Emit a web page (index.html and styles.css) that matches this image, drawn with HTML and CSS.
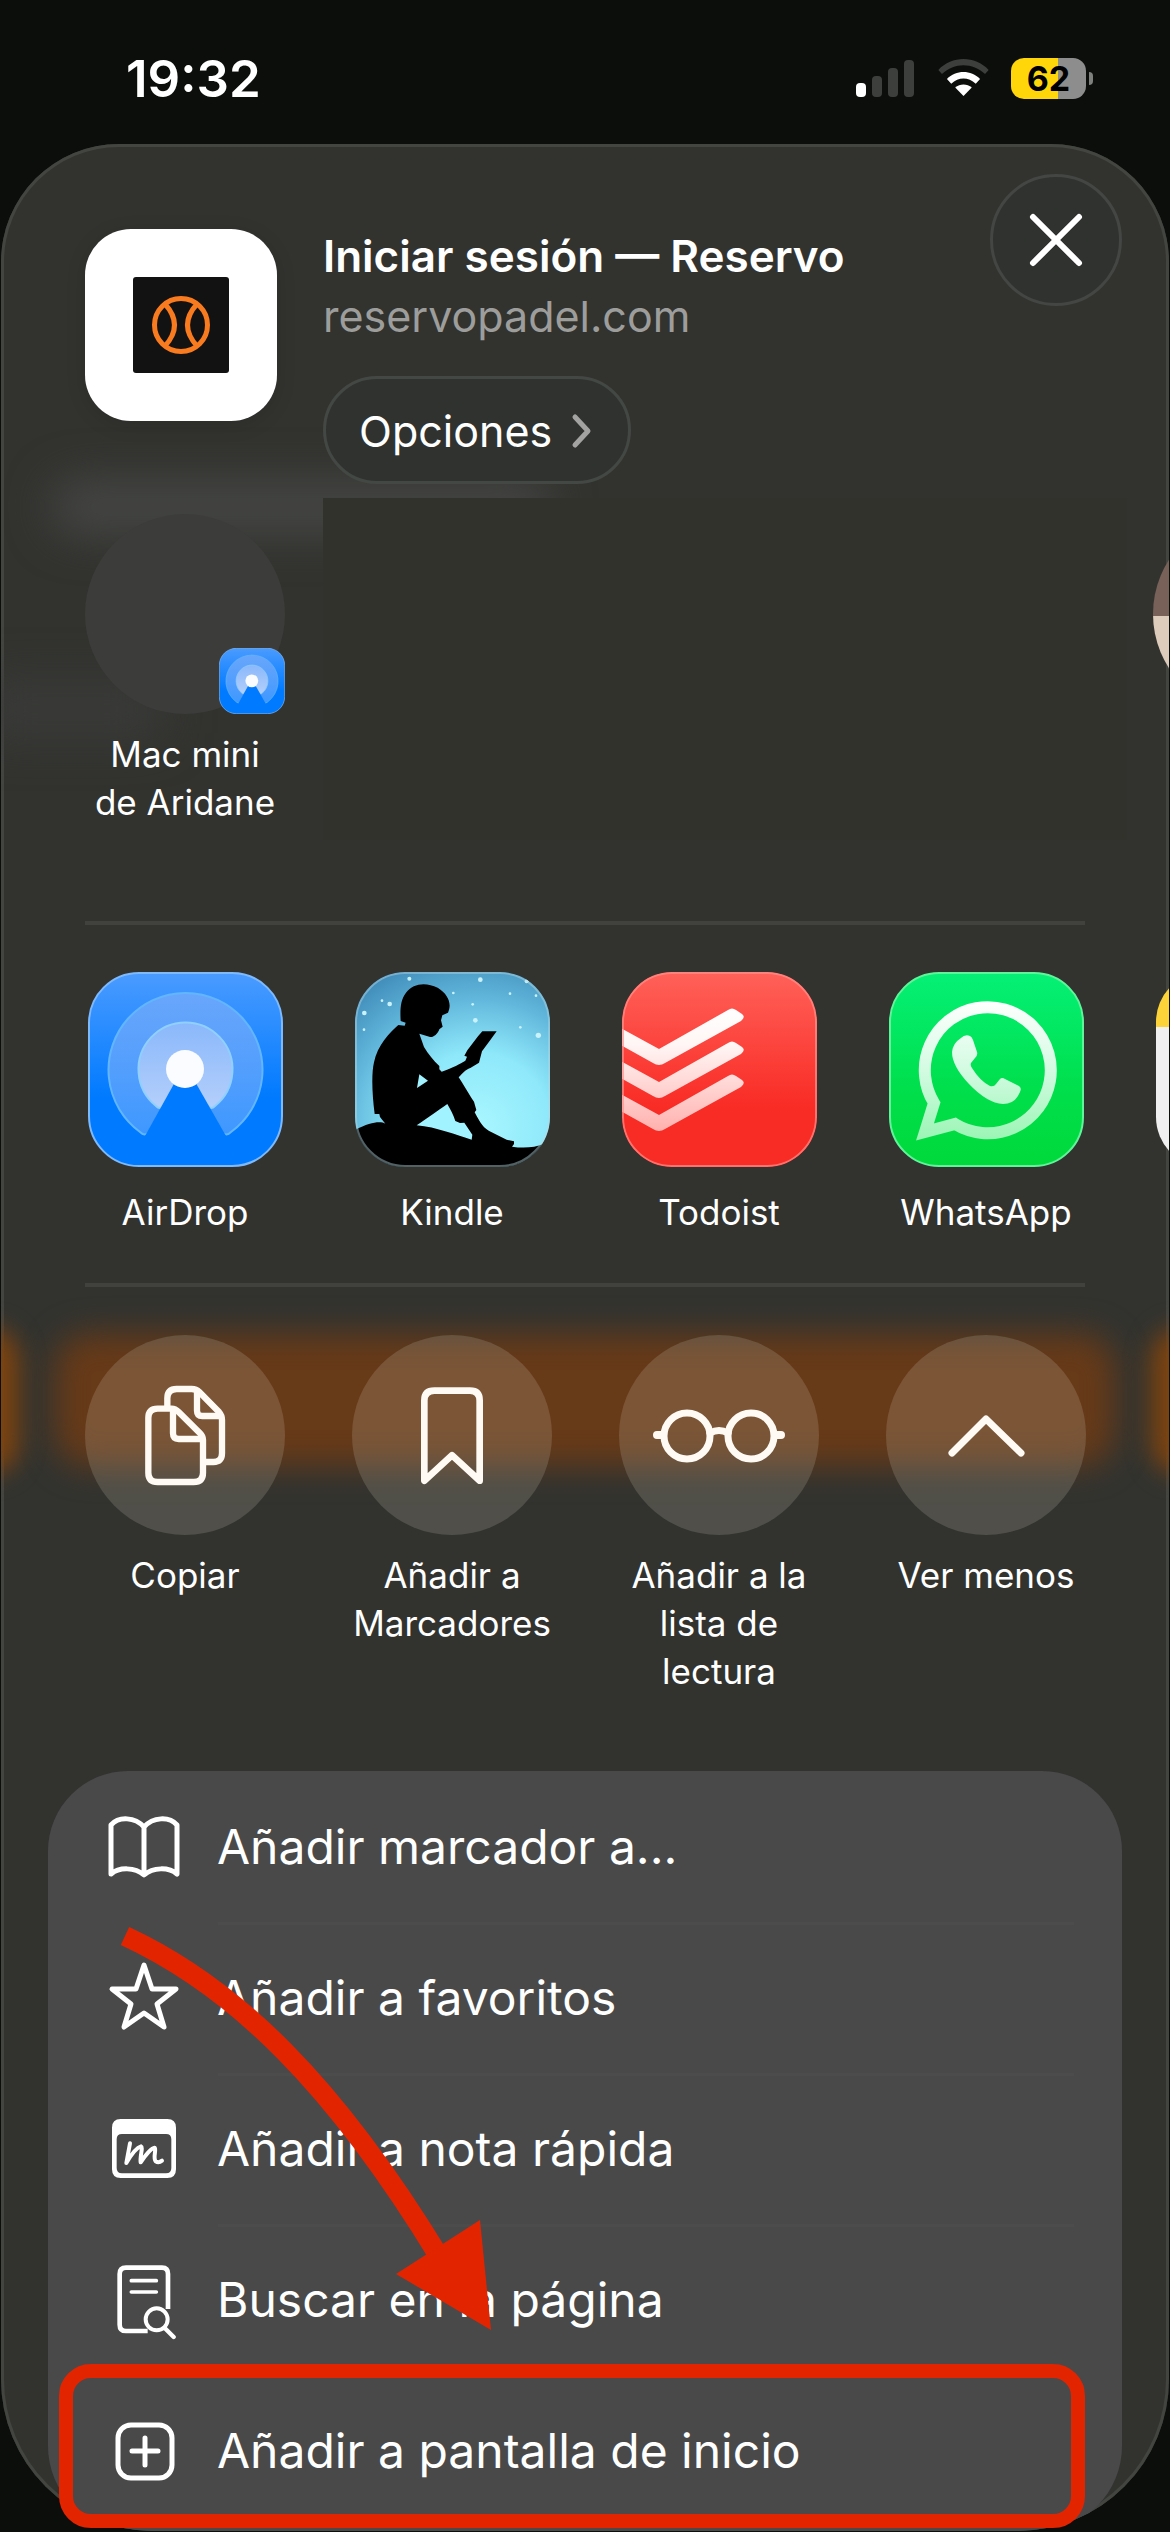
FILE: index.html
```html
<!DOCTYPE html>
<html lang="es">
<head>
<meta charset="utf-8">
<meta name="viewport" content="width=device-width, initial-scale=1">
<title>Iniciar sesión — Reservo</title>
<link rel="stylesheet" href="styles.css">
</head>
<body>
<div class="screen">
  <header class="status">
    <time class="status-time">19:32</time>
    <div class="status-icons">
      <svg class="signal" viewBox="0 0 60 40" aria-hidden="true">
        <rect x="0" y="25" width="10" height="14" rx="4" fill="#fff"/>
        <g fill="#3d3f3d"><rect x="16" y="18" width="10" height="21" rx="4"/><rect x="32" y="10" width="10" height="29" rx="4"/><rect x="48" y="2" width="10" height="37" rx="4"/></g>
      </svg>
      <svg class="wifi" viewBox="288 54 154 120" aria-hidden="true">
        <path d="M289 90C330 46 400 46 441 90L430 102C393 67 337 67 300 102Z" fill="#3d3f3d"/>
        <path d="M315 117C342 89 388 89 415 117L402 131C380 110 350 110 328 131Z" fill="#fff"/>
        <path d="M340 143C354 130 376 130 390 143L365 168Z" fill="#fff"/>
      </svg>
      <div class="battery"><span class="battery-level">62</span></div>
    </div>
  </header>

  <main class="sheet">
    <div class="glow glow-heading"></div>
    <div class="glow glow-text"></div>
    <div class="glow glow-button"></div>
    <div class="glow glow-left"></div>
    <div class="glow glow-right"></div>

    <section class="page-info">
      <div class="site-icon">
        <svg viewBox="0 0 96 96" aria-hidden="true">
          <rect width="96" height="96" rx="3" fill="#121212"/>
          <g fill="none" stroke="#f97b1f" stroke-width="5"><circle cx="48" cy="48" r="26.500"/><path d="M32 27Q51 48 32 69M64 27Q45 48 64 69"/></g>
        </svg>
      </div>
      <div class="page-text">
        <h1 class="page-title">Iniciar sesión — Reservo</h1>
        <p class="page-domain">reservopadel.com</p>
        <button class="options" type="button">Opciones
          <svg viewBox="0 0 24 36" aria-hidden="true"><path d="M5 4L18 18L5 32" fill="none" stroke="#a3a4a2" stroke-width="5" stroke-linecap="round" stroke-linejoin="round"/></svg>
        </button>
      </div>
      <button class="close" type="button" aria-label="Cerrar">
        <svg viewBox="0 0 54 54" aria-hidden="true"><path d="M4 4L50 50M50 4L4 50" stroke="#fff" stroke-width="6" stroke-linecap="round"/></svg>
      </button>
    </section>

    <section class="people">
      <button class="tile person" type="button">
        <span class="avatar">
          <svg class="avatar-badge" viewBox="0 0 195 195" aria-hidden="true"><use href="#airdrop"/></svg>
        </span>
        <span class="tile-label">Mac mini<br>de Aridane</span>
      </button>
      <div class="people-hidden"></div>
      <div class="photo"></div>
    </section>

    <hr class="divider">

    <section class="tiles apps">
      <button class="tile" type="button">
        <svg class="app-icon" viewBox="0 0 195 195" aria-hidden="true">
          <defs>
            <linearGradient id="blue" x1="0" y1="0" x2="0" y2="1"><stop offset="0" stop-color="#4a9bff"/><stop offset=".65" stop-color="#007aff"/></linearGradient>
            <linearGradient id="ring" x1="0" y1="0" x2="0" y2="1"><stop offset="0" stop-color="#69a6fb"/><stop offset="1" stop-color="#3f98ff"/></linearGradient>
            <linearGradient id="core" x1="0" y1="0" x2="0" y2="1"><stop offset="0" stop-color="#8ab8fb"/><stop offset="1" stop-color="#b4cffb"/></linearGradient>
          </defs>
          <g id="airdrop">
            <rect x="1" y="1" width="193" height="193" rx="50" fill="url(#blue)" stroke="#7db9fb" stroke-width="2"/>
            <path d="M97 98L61 160Q57 165 52 160A77 77 0 1 1 143 160Q138 165 134 160Z" fill="url(#ring)" stroke="#62b6ff" stroke-width="2"/>
            <path d="M97 98L75 134Q72 138 68 134A47 47 0 1 1 127 134Q123 138 120 134Z" fill="url(#core)" stroke="#90d0ff" stroke-width="2"/>
            <path d="M97 92L57 164H138Z" fill="#007aff"/>
            <circle cx="97" cy="97" r="19" fill="#fafcff"/>
          </g>
        </svg>
        <span class="tile-label">AirDrop</span>
      </button>
      <button class="tile" type="button">
        <svg class="app-icon" viewBox="15 15 585 585" aria-hidden="true">
          <defs>
            <radialGradient id="sky" gradientUnits="userSpaceOnUse" cx="380" cy="480" r="560"><stop offset="0" stop-color="#a9f7ff"/><stop offset=".4" stop-color="#8ee8fa"/><stop offset=".7" stop-color="#5fb5da"/><stop offset="1" stop-color="#3b84b4"/></radialGradient>
            <clipPath id="kindle-clip"><rect x="15" y="15" width="585" height="585" rx="150"/></clipPath>
          </defs>
          <g clip-path="url(#kindle-clip)">
            <rect x="15" y="15" width="585" height="585" fill="url(#sky)"/>
            <g fill="#c9f2fb"><circle cx="178" cy="35" r="6"/><circle cx="391" cy="38" r="7"/><circle cx="530" cy="43" r="6"/><circle cx="119" cy="111" r="7"/><circle cx="96" cy="101" r="4"/><circle cx="43" cy="138" r="7"/><circle cx="42" cy="188" r="4"/><circle cx="376" cy="160" r="7"/><circle cx="368" cy="112" r="4"/><circle cx="565" cy="205" r="8"/><circle cx="480" cy="80" r="4"/><circle cx="310" cy="78" r="4"/><circle cx="511" cy="181" r="4"/><circle cx="558" cy="86" r="4"/></g>
            <path d="M10 492C60 465 90 462 106 470L90 450L88 441H74C66 380 64 320 72 286C82 235 120 195 145 174L164 176L167 167L152 162C150 130 151 98 168 77C190 48 228 45 263 62C296 82 306 112 294 137L277 145L273 160L278 179L268 187C262 205 245 214 238 209L208 200L222 240C235 262 250 280 268 297V307L275 314C310 302 330 290 346 281L351 269L343 266L352 250L384 208L397 193H440L421 219L396 253L387 287L361 303C345 308 337 320 326 331C340 352 358 384 372 404L379 429L374 436C392 470 400 484 425 496L470 518L492 523V531L486 539C520 544 555 542 580 531L620 560V620H0Z"/>
            <path d="M208 322L234 341L201 363ZM200 475C230 455 265 430 292 411C302 428 310 444 316 462L330 468L343 467L367 503L365 518C320 505 260 480 200 475Z" fill="#a0f3ff"/>
            <rect x="18" y="18" width="579" height="579" rx="148" fill="none" stroke="#b9d6df" stroke-opacity=".45" stroke-width="6"/>
          </g>
        </svg>
        <span class="tile-label">Kindle</span>
      </button>
      <button class="tile" type="button">
        <svg class="app-icon" viewBox="0 0 195 195" aria-hidden="true">
          <defs>
            <linearGradient id="red" x1="0" y1="0" x2="0" y2="1"><stop offset="0" stop-color="#ff6159"/><stop offset=".7" stop-color="#f92b25"/></linearGradient>
            <linearGradient id="checks" gradientUnits="userSpaceOnUse" x1="0" y1="36" x2="0" y2="158"><stop offset="0" stop-color="#fff"/><stop offset=".3" stop-color="#fff6f5"/><stop offset="1" stop-color="#ffb2af"/></linearGradient>
            <clipPath id="todo-clip"><rect width="195" height="195" rx="50"/></clipPath>
          </defs>
          <g clip-path="url(#todo-clip)">
            <rect width="195" height="195" fill="url(#red)"/>
            <g fill="url(#checks)">
              <path d="M-3 55L37 77L106 38Q110 35 114 38L120 42Q124 45 119 49L43 91Q37 95 31 91L-3 72Z"/>
              <path d="M-3 88L37 110L106 71Q110 68 114 71L120 75Q124 78 119 82L43 124Q37 128 31 124L-3 105Z"/>
              <path d="M-3 121L37 143L106 104Q110 101 114 104L120 108Q124 111 119 115L43 157Q37 161 31 157L-3 138Z"/>
            </g>
            <rect x="1" y="1" width="193" height="193" rx="49" fill="none" stroke="#ff908b" stroke-opacity=".7" stroke-width="2"/>
          </g>
        </svg>
        <span class="tile-label">Todoist</span>
      </button>
      <button class="tile" type="button">
        <svg class="app-icon" viewBox="0 0 195 195" aria-hidden="true">
          <defs>
            <linearGradient id="green" x1="0" y1="0" x2="0" y2="1"><stop offset="0" stop-color="#05f076"/><stop offset=".6" stop-color="#00df4c"/><stop offset="1" stop-color="#00d93a"/></linearGradient>
            <linearGradient id="mint" gradientUnits="userSpaceOnUse" x1="0" y1="28" x2="0" y2="168"><stop offset="0" stop-color="#fff"/><stop offset=".5" stop-color="#d3fbe2"/><stop offset="1" stop-color="#9af5b4"/></linearGradient>
          </defs>
          <rect x="1" y="1" width="193" height="193" rx="49" fill="url(#green)" stroke="#60f49a" stroke-width="2"/>
          <path d="M36 160L45 131A63 63 0 1 1 66 152Z" fill="none" stroke="url(#mint)" stroke-width="12"/>
          <path d="M72 66Q76 62 81 64Q83 65 84 68L88 80Q89 83 86 86L82 91Q81 93 83 96Q91 109 101 114Q105 115 107 112L111 107Q113 105 116 107L130 114Q133 116 131 120Q126 132 114 132Q98 131 80 112Q63 94 63 80Q64 71 72 66Z" fill="url(#mint)"/>
        </svg>
        <span class="tile-label">WhatsApp</span>
      </button>
      <div class="tile"><div class="app-icon notes"></div></div>
    </section>

    <hr class="divider">

    <section class="tiles actions">
      <button class="tile" type="button">
        <span class="disc"><svg viewBox="-135 -105 600 600" aria-hidden="true"><g fill="none" stroke="#fffaf3" stroke-width="19" stroke-linejoin="round"><path d="M112 116V85Q112 57 140 57H185Q199 57 208 66L267 126Q276 136 276 150V250Q276 276 250 276H222"/><path d="M201 62V122Q201 138 217 138H270"/><path d="M83 116H125Q136 116 146 126L210 190Q219 199 219 210V308Q219 336 191 336H83Q55 336 55 308V144Q55 116 83 116Z"/><path d="M129 122V190Q129 207 146 207H214"/></g></svg></span>
        <span class="tile-label">Copiar</span>
      </button>
      <button class="tile" type="button">
        <span class="disc"><svg viewBox="666 -105 600 600" aria-hidden="true"><path d="M883 332V92Q883 62 913 62H1020Q1049 62 1049 92V332L966 256Z" fill="none" stroke="#fffaf3" stroke-width="20" stroke-linejoin="round"/></svg></span>
        <span class="tile-label">Añadir a Marcadores</span>
      </button>
      <button class="tile" type="button">
        <span class="disc"><svg viewBox="0 0 200 200" aria-hidden="true"><g fill="none" stroke="#fffaf3" stroke-width="7" stroke-linecap="round"><circle cx="68" cy="101" r="23"/><circle cx="132" cy="101" r="23"/><path d="M91 98Q100 93 109 98"/><path d="M38 100H44M156 100H162" stroke-width="8"/></g></svg></span>
        <span class="tile-label">Añadir a la lista de lectura</span>
      </button>
      <button class="tile" type="button">
        <span class="disc"><svg viewBox="0 0 200 200" aria-hidden="true"><path d="M66 118L100 84L135 118" fill="none" stroke="#fffaf3" stroke-width="7" stroke-linecap="round" stroke-linejoin="round"/></svg></span>
        <span class="tile-label">Ver menos</span>
      </button>
    </section>

    <ul class="menu">
      <li><button class="menu-item" type="button">
        <svg viewBox="0 0 80 80" aria-hidden="true"><path d="M40 20C31 10 15 9 7 18V67C15 60 31 60 40 68C49 60 65 60 73 67V18C65 9 49 10 40 20ZV68" fill="none" stroke="#fff" stroke-width="5" stroke-linejoin="round"/></svg>
        <span class="menu-label">Añadir marcador a...</span></button></li>
      <li><button class="menu-item" type="button">
        <svg viewBox="0 0 80 80" aria-hidden="true"><path d="M40 7L48 31H72L53 46L60 69L40 55L20 69L27 46L8 31H32Z" fill="none" stroke="#fff" stroke-width="5" stroke-linejoin="round"/></svg>
        <span class="menu-label">Añadir a favoritos</span></button></li>
      <li><button class="menu-item" type="button">
        <svg viewBox="42 27 240 240" aria-hidden="true"><path fill="#fff" fill-rule="evenodd" d="M92 57H232Q258 57 258 83V208Q258 234 232 234H92Q66 234 66 208V83Q66 57 92 57ZM96 102Q80 102 80 118V204Q80 220 96 220H228Q244 220 244 204V118Q244 102 228 102Z"/><path d="M120 130L109 189C120 170 138 143 153 139C160 142 149 170 152 187C162 172 180 145 194 143C200 149 188 172 197 184Q206 190 216 182" fill="none" stroke="#fff" stroke-width="12" stroke-linecap="round" stroke-linejoin="round"/></svg>
        <span class="menu-label">Añadir a nota rápida</span></button></li>
      <li><button class="menu-item" type="button">
        <svg viewBox="42 480 240 240" aria-hidden="true"><g fill="none" stroke="#fff" stroke-width="14"><path d="M173 693H108Q89 693 89 674V522Q89 503 108 503H216Q234 503 234 522V627"/><path d="M124 542H199M124 576H199" stroke-width="11" stroke-linecap="round"/><circle cx="200" cy="658" r="33" stroke-width="12"/><path d="M224 684L251 711" stroke-linecap="round" stroke-width="13"/></g></svg>
        <span class="menu-label">Buscar en la página</span></button></li>
      <li><button class="menu-item" type="button">
        <svg viewBox="0 0 80 80" aria-hidden="true"><g fill="none" stroke="#fff" stroke-width="5" stroke-linecap="round"><rect x="14" y="14" width="54" height="53" rx="13"/><path d="M41 27V54M28 40H54"/></g></svg>
        <span class="menu-label">Añadir a pantalla de inicio</span></button></li>
    </ul>
  </main>

  <svg class="arrow" viewBox="120 1920 380 420" aria-hidden="true"><path d="M125 1936C235 1987 335 2085 440 2258" fill="none" stroke="#e32400" stroke-width="20"/><path d="M396 2274L480 2220L491 2330Z" fill="#e32400"/></svg>
  <div class="highlight"></div>
</div>
</body>
</html>
```
FILE: styles.css
```css
* { box-sizing: border-box; }

body {
  margin: 0;
  background: #0c0e0b;
  color: #fff;
  font-family: Inter, "Liberation Sans", sans-serif;
}

h1, p, ul { margin: 0; padding: 0; font-weight: inherit; }
ul { list-style: none; }
button { margin: 0; padding: 0; border: 0; background: none; color: inherit; font: inherit; }
svg { display: block; flex: none; }

.screen { position: relative; overflow: hidden; }

/* Status bar */
.status {
  display: flex;
  justify-content: space-between;
  align-items: center;
  height: 144px;
  padding: 12px 80px 0 126px;
}
.status-time { font-size: 51px; font-weight: 600; }
.status-icons { display: flex; align-items: center; gap: 22px; }
.signal { width: 60px; height: 40px; }
.wifi { width: 51px; height: 40px; }
.battery {
  position: relative;
  width: 75px;
  height: 41px;
  margin-right: 4px;
  border-radius: 13px;
  background: linear-gradient(90deg, #ffd60a 63%, #8c8d8c 63%);
  color: #000;
  font-size: 34px;
  font-weight: 700;
  line-height: 41px;
  text-align: center;
}
.battery::after {
  content: "";
  position: absolute;
  top: 14px;
  right: -7px;
  width: 4px;
  height: 13px;
  border-radius: 0 4px 4px 0;
  background: #7e807e;
}

/* Share sheet */
.sheet {
  position: relative;
  isolation: isolate;
  overflow: hidden;
  margin: 0 1px 1px;
  border-radius: 118px 118px 152px 152px;
  background: #32332f;
  box-shadow: inset 0 0 0 3px #434541;
}

/* Blurred shapes of the page behind the sheet */
.glow { position: absolute; z-index: -1; }
.glow-heading { top: 335px; left: 50px; width: 500px; height: 56px; border-radius: 28px; background: #454644; filter: blur(22px); }
.glow-text { top: 540px; left: -20px; width: 180px; height: 50px; background: #3b3c3a; filter: blur(24px); }
.glow-button { top: 1190px; left: 54px; right: 54px; height: 132px; border-radius: 34px; background: #673a18; filter: blur(16px); }
.glow-left, .glow-right { top: 1184px; width: 60px; height: 146px; border-radius: 30px; background: #7d430f; filter: blur(12px); }
.glow-left { left: -42px; }
.glow-right { right: -42px; }

.page-info {
  display: flex;
  align-items: flex-start;
  padding: 30px 47px 0 84px;
}
.site-icon {
  display: grid;
  place-items: center;
  width: 192px;
  height: 192px;
  margin: 55px 46px 0 0;
  border-radius: 46px;
  background: #fff;
  box-shadow: 0 4px 20px rgba(0, 0, 0, .12);
}
.site-icon svg { width: 96px; height: 96px; }
.page-text { padding-top: 52px; }
.page-title { font-size: 44px; line-height: 60px; font-weight: 600; }
.page-domain { color: #9d9e9c; font-size: 43px; line-height: 60px; }
.options {
  display: flex;
  align-items: center;
  gap: 18px;
  height: 108px;
  margin-top: 30px;
  padding: 2px 34px 0 33px;
  border: 3px solid #444844;
  border-radius: 54px;
  background: #303230;
  font-size: 43px;
}
.options svg { width: 24px; height: 36px; }
.close {
  display: grid;
  place-items: center;
  width: 132px;
  height: 132px;
  margin-left: auto;
  border: 3px solid #434643;
  border-radius: 50%;
  background: #303230;
}
.close svg { width: 54px; height: 54px; }

/* People */
.people {
  display: flex;
  margin: 14px 0 81px;
  padding-left: 84px;
}
.person { padding-top: 16px; }
.avatar {
  position: relative;
  width: 200px;
  height: 200px;
  border-radius: 50%;
  background: #3c3c3a;
}
.avatar-badge { position: absolute; right: 0; bottom: 0; width: 66px; height: 66px; }
.people-hidden { flex: 1; height: 342px; margin: 0 26px 0 38px; background: #32322c; }
.photo {
  flex: none;
  width: 200px;
  height: 200px;
  margin: 16px -184px 0 0;
  border-radius: 50%;
  background: linear-gradient(#776158 51%, #ddcbbb 51%);
}

.divider { height: 4px; margin: 0 84px; border: 0; background: #41423e; }

/* App and action tiles */
.tiles { display: flex; gap: 67px; padding-left: 84px; }
.apps { margin: 47px 0; }
.actions { margin: 48px 0 76px; }
.tile {
  display: flex;
  flex: none;
  flex-direction: column;
  align-items: center;
  justify-content: flex-start;
  gap: 16px;
  width: 200px;
}
.apps .tile { gap: 21px; }
.tile-label { font-size: 35px; line-height: 48px; text-align: center; }
.actions .tile-label { margin: 0 -8px; }
.app-icon { width: 195px; height: 195px; }
.notes { border-radius: 50px; background: linear-gradient(#fdd33a 28%, #f0f0f0 28%); }
.disc { width: 200px; height: 200px; border-radius: 50%; background: rgba(216, 208, 195, .18); }
.disc svg { width: 200px; height: 200px; }

/* Menu */
.menu {
  margin: 0 47px;
  padding-bottom: 5px;
  border-radius: 80px 80px 85px 85px;
  background: #49494a;
}
.menu-item {
  position: relative;
  display: flex;
  align-items: center;
  gap: 33px;
  width: 100%;
  height: 151px;
  padding-left: 56px;
  text-align: left;
}
.menu-item svg { width: 80px; height: 80px; }
.menu-label { font-size: 48px; line-height: 60px; }
.menu li + li { background: linear-gradient(#4c4c4d, #4c4c4d) 170px 0 / calc(100% - 218px) 3px no-repeat; }

/* Annotations */
.arrow { position: absolute; bottom: 192px; left: 120px; width: 380px; height: 420px; }
.highlight {
  position: absolute;
  right: 85px;
  bottom: 4px;
  left: 59px;
  height: 164px;
  border: 14px solid #e32400;
  border-radius: 32px;
}
```
